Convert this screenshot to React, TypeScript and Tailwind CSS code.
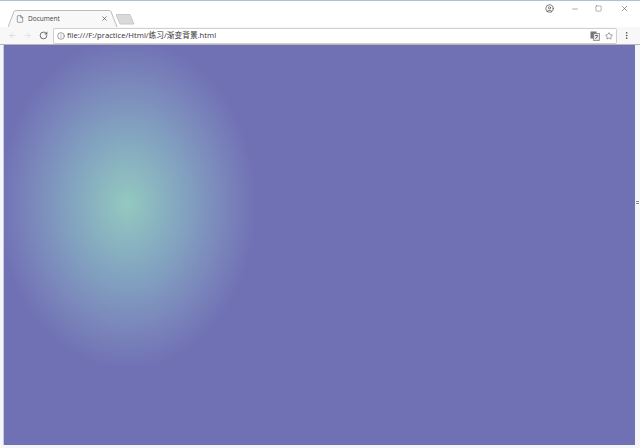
import { Info, RotateCw, ArrowLeft, ArrowRight, Star, Minus, Square, X, File, CircleUser, EllipsisVertical } from "lucide-react";

function TranslateIcon() {
    return (
        <svg width="10" height="10" viewBox="0 0 10 10">
            <rect x="0.5" y="0.5" width="6" height="7" fill="#777777" />
            <rect x="3.5" y="2.5" width="6" height="7" fill="#e4e4e4" stroke="#777777" strokeWidth="0.7" />
            <path d="M5 4.5 H8 M6.5 4 V5 M5.3 8 L7.8 5" fill="none" stroke="#555555" strokeWidth="0.7" />
        </svg>
    );
}

export default function App() {
    return (
        <div className="flex h-[448px] w-[640px] flex-col overflow-hidden bg-[#f4f6f8] font-['Open_Sans','Noto_Sans_CJK_SC',sans-serif]">
            {/* window title row */}
            <div className="flex h-[27px] border-t border-[#a9c4dc] bg-white pl-[8px]">
                <div className="relative mt-[9px] flex h-[17px] w-[110px] items-center pl-[8px] pr-[10px]">
                    <svg width="110" height="17" viewBox="0 0 110 17" className="absolute left-0 top-0">
                        <path d="M0 17 L6 1.5 Q6.5 .5 8 .5 L101 .5 Q102.5 .5 103 1.5 L109 17" fill="#f8f8f8" stroke="#bcbcbc" />
                    </svg>
                    <File size={8} strokeWidth={1.5} className="relative text-[#444444]" />
                    <span className="relative ml-[4px] flex-1 text-[6.5px] text-[#444444]">Document</span>
                    <X size={7} strokeWidth={2.5} className="relative text-[#555555]" />
                </div>
                <svg width="20" height="12" viewBox="0 0 20 12" className="ml-[-2px] mt-[13px]">
                    <path d="M0 .5 L14 .5 L18 10 L4 10 Z" fill="#d9d9d9" stroke="#c8c8c8" />
                </svg>
                <div className="ml-auto flex items-start pr-[11px] pt-[1px] text-[#555555]">
                    <CircleUser size={9} strokeWidth={2} className="mr-[17px] mt-[2px]" />
                    <Minus size={8} strokeWidth={1.5} className="mr-[16px] mt-[3px]" />
                    <Square size={7} strokeWidth={1.5} className="mr-[18px] mt-[3px]" />
                    <X size={9} strokeWidth={1.5} className="mt-[2px]" />
                </div>
            </div>
            {/* toolbar */}
            <div className="flex h-[18px] items-center border-b border-[#b5b5b5] bg-[#f8f8f8] pl-[8px] pr-[9px]">
                <ArrowLeft size={9} strokeWidth={2} className="text-[#d6d6d6]" />
                <ArrowRight size={9} strokeWidth={2} className="ml-[6px] text-[#dedede]" />
                <RotateCw size={9} strokeWidth={2} className="ml-[7px] text-[#444444]" />
                <div className="ml-[5px] flex h-[16px] w-[564px] items-center rounded-[2px] border border-[#d0d0d0] bg-white pl-[3px] pr-[3px]">
                    <Info size={8} strokeWidth={1.5} className="text-[#444444]" />
                    <span className="ml-[2px] flex-1 text-[7.7px] text-[#333333]">file:///F:/practice/Html/练习/渐变背景.html</span>
                    <TranslateIcon />
                    <Star size={8} strokeWidth={1.5} className="ml-[5px] text-[#444444]" />
                </div>
                <EllipsisVertical size={9} strokeWidth={2} className="ml-auto text-[#444444]" />
            </div>
            {/* page */}
            <div className="flex flex-1 pb-[3px] pl-[3px]">
                <div className="flex-1 border-l border-[#c5cbe0] bg-[#7070b4] bg-[radial-gradient(ellipse_130px_166px_at_123px_159px,#93c9c0,#82a2c0_45%,#7a86bb_75%,#7070b4)]" />
                <div className="flex w-[5px] flex-col gap-[1px] pl-[1px] pt-[156px]">
                    <div className="h-px w-[3px] bg-[#8c8c8c]" />
                    <div className="h-px w-[3px] bg-[#8c8c8c]" />
                </div>
            </div>
        </div>
    );
}
